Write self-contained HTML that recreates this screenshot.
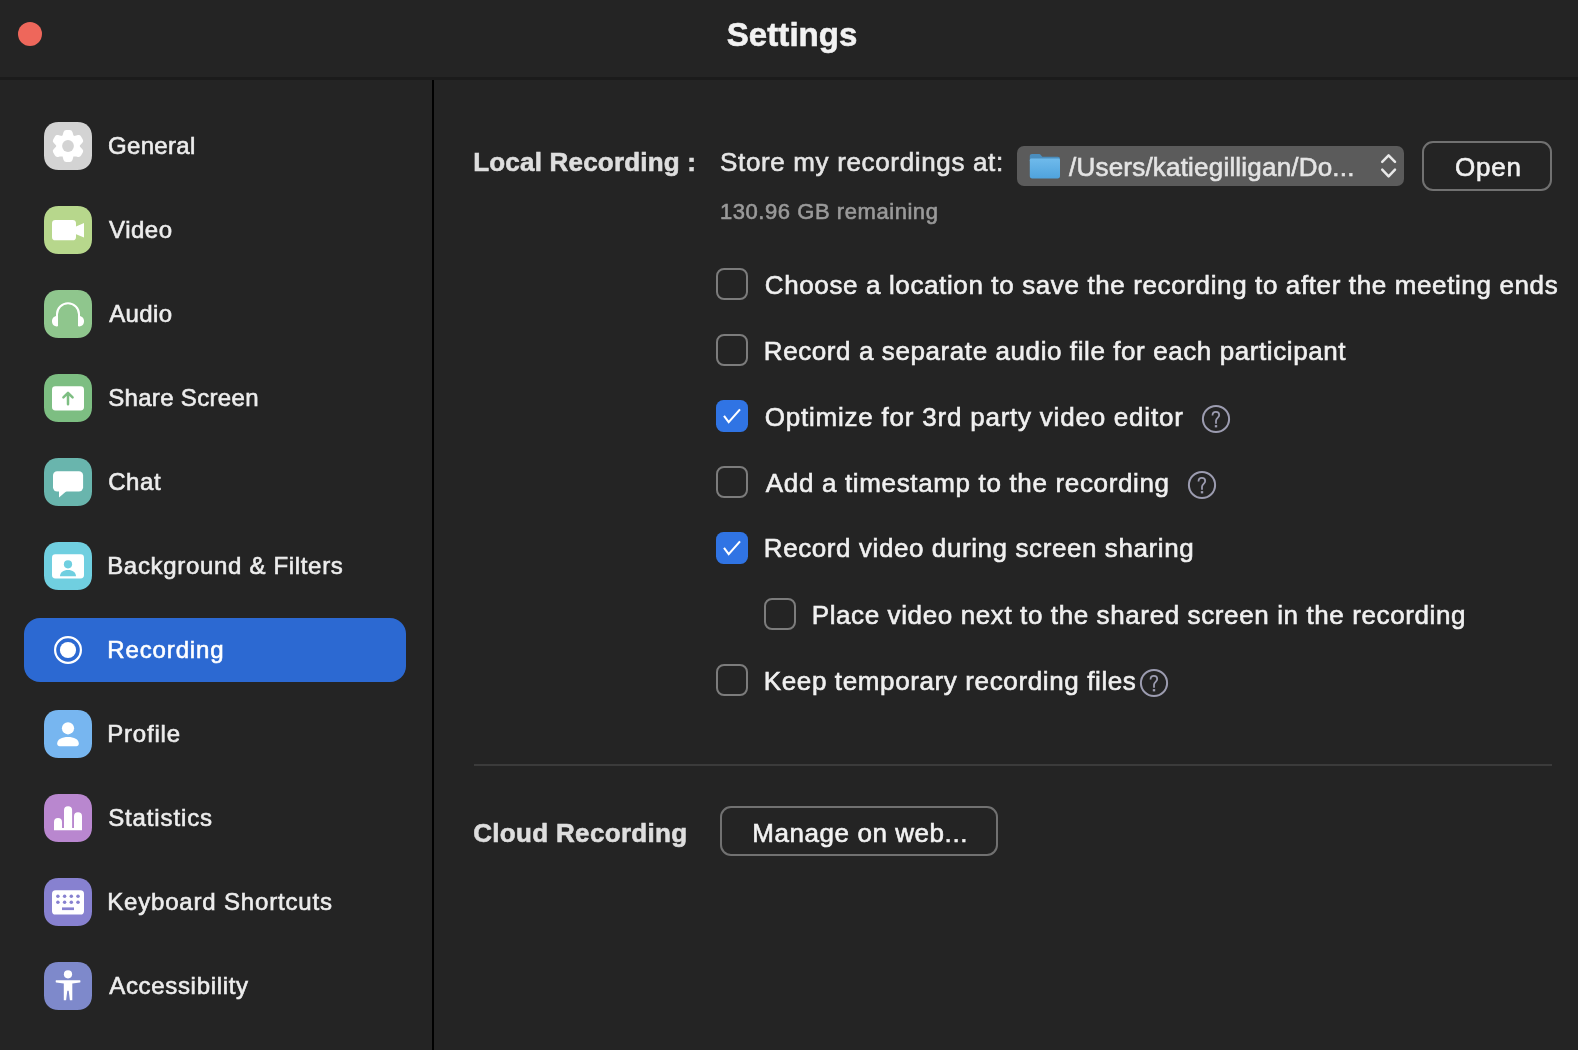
<!DOCTYPE html>
<html><head><meta charset="utf-8"><title>Settings</title>
<style>
html,body{margin:0;padding:0;background:#242424;}
body{width:1578px;height:1050px;position:relative;overflow:hidden;font-family:"Liberation Sans",sans-serif;}
.t{position:absolute;white-space:nowrap;line-height:1;-webkit-text-stroke:0.6px currentColor;}
.ic{position:absolute;display:block;}
.abs{position:absolute;}
.cb{position:absolute;width:32px;height:32px;box-sizing:border-box;border:2px solid #7c7c7c;border-radius:8px;}
.cb.on{border:none;background:#3074e4;border-radius:7.5px;}
.cb svg{display:block;}
.btn{position:absolute;box-sizing:border-box;border:2px solid #717171;border-radius:11px;}
</style></head><body>
<div class="abs" style="left:18px;top:22px;width:24px;height:24px;border-radius:50%;background:#ee675b"></div>
<div class="abs" style="left:0;top:77px;width:1578px;height:3px;background:#1b1b1b"></div>
<div class="abs" style="left:432px;top:80px;width:2px;height:970px;background:#000"></div>
<div class="abs" style="left:24px;top:618px;width:382px;height:64px;border-radius:16px;background:#2c69d2"></div>
<svg class="ic" style="left:44px;top:122px" width="48" height="48" viewBox="0 0 48 48"><path d="M14.5,0 L33.5,0 C42.2,0 48,5.8 48,14.5 L48,33.5 C48,42.2 42.2,48 33.5,48 L14.5,48 C5.8,48 0,42.2 0,33.5 L0,14.5 C0,5.8 5.8,0 14.5,0Z" fill="#d3d3d3"/><path d="M27.03,15.21 L25.75,10.71 L22.25,10.71 L20.97,15.21 L17.90,16.98 L13.37,15.84 L11.62,18.87 L14.87,22.23 L14.87,25.77 L11.62,29.13 L13.37,32.16 L17.90,31.02 L20.97,32.79 L22.25,37.29 L25.75,37.29 L27.03,32.79 L30.10,31.02 L34.63,32.16 L36.38,29.13 L33.13,25.77 L33.13,22.23 L36.38,18.87 L34.63,15.84 L30.10,16.98Z" fill="#fff" stroke="#fff" stroke-width="5.6" stroke-linejoin="round"/><circle cx="24" cy="24" r="5.9" fill="#d3d3d3"/></svg>
<svg class="ic" style="left:44px;top:206px" width="48" height="48" viewBox="0 0 48 48"><path d="M14.5,0 L33.5,0 C42.2,0 48,5.8 48,14.5 L48,33.5 C48,42.2 42.2,48 33.5,48 L14.5,48 C5.8,48 0,42.2 0,33.5 L0,14.5 C0,5.8 5.8,0 14.5,0Z" fill="#b7d78c"/><rect x="8" y="14" width="24" height="20.3" rx="3.4" fill="#fff"/><path d="M31.5,20.7 L40,17.1 L40,31.5 L31.5,28Z" fill="#fff"/></svg>
<svg class="ic" style="left:44px;top:290px" width="48" height="48" viewBox="0 0 48 48"><path d="M14.5,0 L33.5,0 C42.2,0 48,5.8 48,14.5 L48,33.5 C48,42.2 42.2,48 33.5,48 L14.5,48 C5.8,48 0,42.2 0,33.5 L0,14.5 C0,5.8 5.8,0 14.5,0Z" fill="#8fc68d"/><path d="M13,36.3 V24.3 A11,11 0 0 1 35,24.3 V36.3" fill="none" stroke="#fff" stroke-width="2"/><path d="M13,26 C9.8,26 8,28.3 8,31.15 C8,34 9.8,36.3 13,36.3Z" fill="#fff"/><path d="M35,26 C38.2,26 40,28.3 40,31.15 C40,34 38.2,36.3 35,36.3Z" fill="#fff"/></svg>
<svg class="ic" style="left:44px;top:374px" width="48" height="48" viewBox="0 0 48 48"><path d="M14.5,0 L33.5,0 C42.2,0 48,5.8 48,14.5 L48,33.5 C48,42.2 42.2,48 33.5,48 L14.5,48 C5.8,48 0,42.2 0,33.5 L0,14.5 C0,5.8 5.8,0 14.5,0Z" fill="#7dbe82"/><rect x="8" y="12.3" width="32" height="24.2" rx="3.4" fill="#fff"/><path d="M24,30.2 V19 M19.4,23.3 L24,18.8 L28.6,23.3" fill="none" stroke="#7dbe82" stroke-width="2.5" stroke-linecap="round" stroke-linejoin="round"/></svg>
<svg class="ic" style="left:44px;top:458px" width="48" height="48" viewBox="0 0 48 48"><path d="M14.5,0 L33.5,0 C42.2,0 48,5.8 48,14.5 L48,33.5 C48,42.2 42.2,48 33.5,48 L14.5,48 C5.8,48 0,42.2 0,33.5 L0,14.5 C0,5.8 5.8,0 14.5,0Z" fill="#69b5ad"/><rect x="9" y="13.2" width="30.1" height="20.2" rx="4.2" fill="#fff"/><path d="M15,32 L15,39.6 L22.6,33 Z" fill="#fff"/></svg>
<svg class="ic" style="left:44px;top:542px" width="48" height="48" viewBox="0 0 48 48"><path d="M14.5,0 L33.5,0 C42.2,0 48,5.8 48,14.5 L48,33.5 C48,42.2 42.2,48 33.5,48 L14.5,48 C5.8,48 0,42.2 0,33.5 L0,14.5 C0,5.8 5.8,0 14.5,0Z" fill="#70cfe0"/><rect x="8" y="12.3" width="32" height="24.2" rx="3.4" fill="#fff"/><circle cx="24" cy="22.3" r="4.1" fill="#70cfe0"/><path d="M16,34.2 C16,30.2 19.4,27.9 24,27.9 C28.6,27.9 32,30.2 32,34.2Z" fill="#70cfe0"/></svg>
<svg class="ic" style="left:44px;top:626px" width="48" height="48" viewBox="0 0 48 48"><circle cx="24" cy="24" r="12.9" fill="none" stroke="#fff" stroke-width="2.2"/><circle cx="24" cy="24" r="8.1" fill="#fff"/></svg>
<svg class="ic" style="left:44px;top:710px" width="48" height="48" viewBox="0 0 48 48"><path d="M14.5,0 L33.5,0 C42.2,0 48,5.8 48,14.5 L48,33.5 C48,42.2 42.2,48 33.5,48 L14.5,48 C5.8,48 0,42.2 0,33.5 L0,14.5 C0,5.8 5.8,0 14.5,0Z" fill="#77b6f0"/><circle cx="24" cy="18.3" r="6.1" fill="#fff"/><path d="M13.2,33.6 C13.2,29.4 18,27.1 24,27.1 C30,27.1 34.8,29.4 34.8,33.6 C34.8,35.4 33.8,36.3 32.3,36.3 L15.7,36.3 C14.2,36.3 13.2,35.4 13.2,33.6Z" fill="#fff"/></svg>
<svg class="ic" style="left:44px;top:794px" width="48" height="48" viewBox="0 0 48 48"><path d="M14.5,0 L33.5,0 C42.2,0 48,5.8 48,14.5 L48,33.5 C48,42.2 42.2,48 33.5,48 L14.5,48 C5.8,48 0,42.2 0,33.5 L0,14.5 C0,5.8 5.8,0 14.5,0Z" fill="#b987cf"/><path d="M10,36.3 V28.1 A4,4 0 0 1 18,28.1 V34.1 H20 V16.3 A4.05,4.05 0 0 1 28.1,16.3 V34.1 H30 V22.3 A4,4 0 0 1 38,22.3 V36.3Z" fill="#fff"/></svg>
<svg class="ic" style="left:44px;top:878px" width="48" height="48" viewBox="0 0 48 48"><path d="M14.5,0 L33.5,0 C42.2,0 48,5.8 48,14.5 L48,33.5 C48,42.2 42.2,48 33.5,48 L14.5,48 C5.8,48 0,42.2 0,33.5 L0,14.5 C0,5.8 5.8,0 14.5,0Z" fill="#8781d0"/><rect x="8" y="12.3" width="32" height="24.2" rx="3.6" fill="#fff"/><circle cx="13.9" cy="18.2" r="1.75" fill="#8781d0"/><circle cx="20.6" cy="18.2" r="1.75" fill="#8781d0"/><circle cx="27.3" cy="18.2" r="1.75" fill="#8781d0"/><circle cx="34.0" cy="18.2" r="1.75" fill="#8781d0"/><circle cx="13.9" cy="24.2" r="1.75" fill="#8781d0"/><circle cx="20.6" cy="24.2" r="1.75" fill="#8781d0"/><circle cx="27.3" cy="24.2" r="1.75" fill="#8781d0"/><circle cx="34.0" cy="24.2" r="1.75" fill="#8781d0"/><rect x="18" y="29.4" width="12" height="2.7" fill="#8781d0"/></svg>
<svg class="ic" style="left:44px;top:962px" width="48" height="48" viewBox="0 0 48 48"><path d="M14.5,0 L33.5,0 C42.2,0 48,5.8 48,14.5 L48,33.5 C48,42.2 42.2,48 33.5,48 L14.5,48 C5.8,48 0,42.2 0,33.5 L0,14.5 C0,5.8 5.8,0 14.5,0Z" fill="#7e89cb"/><circle cx="24" cy="12.3" r="4.1" fill="#fff"/><path d="M12.1,18.3 L36,18.3 Q36.4,18.3 36.4,18.8 L36.4,19.9 Q36.4,20.3 36,20.4 L28.3,21.6 L28.3,38.3 L25.9,38.3 L24.7,28.8 L23.3,28.8 L22.1,38.3 L19.8,38.3 L19.8,21.6 L12.1,20.4 Q11.7,20.3 11.7,19.9 L11.7,18.8 Q11.7,18.3 12.1,18.3Z" fill="#fff"/></svg>
<div class="abs" style="left:1017px;top:146px;width:387px;height:40px;border-radius:7px;background:#5b5b5b"></div>
<svg class="ic" style="left:1029px;top:153px" width="32" height="26" viewBox="0 0 32 26"><defs><linearGradient id="fg" x1="0" y1="0" x2="0" y2="1"><stop offset="0" stop-color="#6fbaeb"/><stop offset="1" stop-color="#4fa3dd"/></linearGradient></defs><path d="M0.8,3.2 C0.8,1.8 1.6,1 3,1 L9.6,1 C10.8,1 11.4,1.4 12.2,2.4 L13.4,3.8 L28.8,3.8 C30.2,3.8 31,4.6 31,6 L31,8 L0.8,8Z" fill="#4a8dbd"/><path d="M0.8,7.2 C0.8,6.2 1.4,5.6 2.6,5.6 L29.2,5.6 C30.4,5.6 31,6.2 31,7.2 L31,23 C31,24.6 30.2,25.4 28.6,25.4 L3.2,25.4 C1.6,25.4 0.8,24.6 0.8,23Z" fill="url(#fg)"/></svg>
<svg class="ic" style="left:1378px;top:150px" width="22" height="32" viewBox="0 0 22 32"><path d="M4.2,11.9 L10.6,5.4 L17,11.9 M4.2,19.7 L10.6,26.3 L17,19.7" fill="none" stroke="#e9e9e9" stroke-width="2.5" stroke-linecap="round" stroke-linejoin="round"/></svg>
<div class="btn" style="left:1422px;top:141px;width:130px;height:50px;"></div>
<div class="cb" style="left:716px;top:268px"></div>
<div class="cb" style="left:716px;top:334px"></div>
<div class="cb on" style="left:716px;top:400px"><svg width="32" height="32" viewBox="0 0 32 32"><path d="M8.0,15.9 L12.7,22.1 L24.0,9.4" fill="none" stroke="#fff" stroke-width="2.1"/></svg></div>
<div class="cb" style="left:716px;top:466px"></div>
<div class="cb on" style="left:716px;top:532px"><svg width="32" height="32" viewBox="0 0 32 32"><path d="M8.0,15.9 L12.7,22.1 L24.0,9.4" fill="none" stroke="#fff" stroke-width="2.1"/></svg></div>
<div class="cb" style="left:764px;top:598px"></div>
<div class="cb" style="left:716px;top:664px"></div>
<svg class="ic" style="left:1200.1px;top:402.9px" width="32" height="32" viewBox="0 0 32 32"><circle cx="16" cy="16" r="13.1" fill="none" stroke="#9c9cb0" stroke-width="2"/><path d="M12.5,12.4 C12.5,10.2 13.9,8.9 15.9,8.9 C17.8,8.9 19.2,10.1 19.2,12 C19.2,14.8 16,14.9 16,17.8 L16,20.7" fill="none" stroke="#9c9cb0" stroke-width="1.75"/><rect x="14.8" y="22.1" width="2.4" height="2.3" fill="#9c9cb0"/></svg>
<svg class="ic" style="left:1186.0px;top:468.9px" width="32" height="32" viewBox="0 0 32 32"><circle cx="16" cy="16" r="13.1" fill="none" stroke="#9c9cb0" stroke-width="2"/><path d="M12.5,12.4 C12.5,10.2 13.9,8.9 15.9,8.9 C17.8,8.9 19.2,10.1 19.2,12 C19.2,14.8 16,14.9 16,17.8 L16,20.7" fill="none" stroke="#9c9cb0" stroke-width="1.75"/><rect x="14.8" y="22.1" width="2.4" height="2.3" fill="#9c9cb0"/></svg>
<svg class="ic" style="left:1138.2px;top:667.2px" width="32" height="32" viewBox="0 0 32 32"><circle cx="16" cy="16" r="13.1" fill="none" stroke="#9c9cb0" stroke-width="2"/><path d="M12.5,12.4 C12.5,10.2 13.9,8.9 15.9,8.9 C17.8,8.9 19.2,10.1 19.2,12 C19.2,14.8 16,14.9 16,17.8 L16,20.7" fill="none" stroke="#9c9cb0" stroke-width="1.75"/><rect x="14.8" y="22.1" width="2.4" height="2.3" fill="#9c9cb0"/></svg>
<div class="abs" style="left:474px;top:764px;width:1078px;height:2px;background:#3b3b3b"></div>
<div class="btn" style="left:720px;top:806px;width:278px;height:50px;"></div>
<div class="abs" style="left:0;top:0;width:1578px;height:1050px;will-change:transform">
<span id="t_title" class="t" style="left:726.80px;top:17.76px;font-size:33px;font-weight:bold;color:#f2f2f2;letter-spacing:0.059px">Settings</span>
<span id="s0" class="t" style="left:108.10px;top:134.08px;font-size:24px;font-weight:normal;color:#ededed;letter-spacing:0.304px">General</span>
<span id="s1" class="t" style="left:109.10px;top:217.98px;font-size:24px;font-weight:normal;color:#ededed;letter-spacing:0.500px">Video</span>
<span id="s2" class="t" style="left:109.20px;top:302.18px;font-size:24px;font-weight:normal;color:#ededed;letter-spacing:0.400px">Audio</span>
<span id="s3" class="t" style="left:108.20px;top:386.28px;font-size:24px;font-weight:normal;color:#ededed;letter-spacing:0.325px">Share Screen</span>
<span id="s4" class="t" style="left:108.20px;top:470.48px;font-size:24px;font-weight:normal;color:#ededed;letter-spacing:0.597px">Chat</span>
<span id="s5" class="t" style="left:107.20px;top:554.38px;font-size:24px;font-weight:normal;color:#ededed;letter-spacing:0.677px">Background &amp; Filters</span>
<span id="s6" class="t" style="left:107.20px;top:638.38px;font-size:24px;font-weight:normal;color:#ffffff;letter-spacing:0.884px">Recording</span>
<span id="s7" class="t" style="left:107.20px;top:722.48px;font-size:24px;font-weight:normal;color:#ededed;letter-spacing:0.804px">Profile</span>
<span id="s8" class="t" style="left:108.20px;top:806.38px;font-size:24px;font-weight:normal;color:#ededed;letter-spacing:0.866px">Statistics</span>
<span id="s9" class="t" style="left:107.20px;top:890.18px;font-size:24px;font-weight:normal;color:#ededed;letter-spacing:0.822px">Keyboard Shortcuts</span>
<span id="s10" class="t" style="left:109.20px;top:974.28px;font-size:24px;font-weight:normal;color:#ededed;letter-spacing:0.680px">Accessibility</span>
<span id="m_local" class="t" style="left:473.20px;top:149.39px;font-size:26px;font-weight:bold;color:#dedede;letter-spacing:0.204px">Local Recording :</span>
<span id="m_store" class="t" style="left:720.00px;top:149.39px;font-size:26px;font-weight:normal;color:#e6e6e6;letter-spacing:0.655px">Store my recordings at:</span>
<span id="m_rem" class="t" style="left:720.00px;top:201.37px;font-size:22px;font-weight:normal;color:#9a9a9a;letter-spacing:0.555px">130.96 GB remaining</span>
<span id="m_path" class="t" style="left:1069.10px;top:153.79px;font-size:26px;font-weight:normal;color:#e4e4e4;letter-spacing:0.200px">/Users/katiegilligan/Do...</span>
<span id="m_open" class="t" style="left:1455.10px;top:154.39px;font-size:26px;font-weight:normal;color:#f2f2f2;letter-spacing:0.730px">Open</span>
<span id="c0" class="t" style="left:764.80px;top:271.89px;font-size:26px;font-weight:normal;color:#f0f0f0;letter-spacing:0.622px">Choose a location to save the recording to after the meeting ends</span>
<span id="c1" class="t" style="left:763.80px;top:337.79px;font-size:26px;font-weight:normal;color:#f0f0f0;letter-spacing:0.587px">Record a separate audio file for each participant</span>
<span id="c2" class="t" style="left:764.80px;top:403.69px;font-size:26px;font-weight:normal;color:#f0f0f0;letter-spacing:0.776px">Optimize for 3rd party video editor</span>
<span id="c3" class="t" style="left:765.80px;top:469.59px;font-size:26px;font-weight:normal;color:#f0f0f0;letter-spacing:0.655px">Add a timestamp to the recording</span>
<span id="c4" class="t" style="left:763.80px;top:535.49px;font-size:26px;font-weight:normal;color:#f0f0f0;letter-spacing:0.588px">Record video during screen sharing</span>
<span id="c5" class="t" style="left:811.70px;top:601.59px;font-size:26px;font-weight:normal;color:#f0f0f0;letter-spacing:0.610px">Place video next to the shared screen in the recording</span>
<span id="c6" class="t" style="left:763.80px;top:667.59px;font-size:26px;font-weight:normal;color:#f0f0f0;letter-spacing:0.621px">Keep temporary recording files</span>
<span id="m_cloud" class="t" style="left:473.20px;top:819.59px;font-size:26px;font-weight:bold;color:#dedede;letter-spacing:0.325px">Cloud Recording</span>
<span id="m_manage" class="t" style="left:752.30px;top:819.99px;font-size:26px;font-weight:normal;color:#f2f2f2;letter-spacing:0.561px">Manage on web...</span>
</div>
</body></html>
